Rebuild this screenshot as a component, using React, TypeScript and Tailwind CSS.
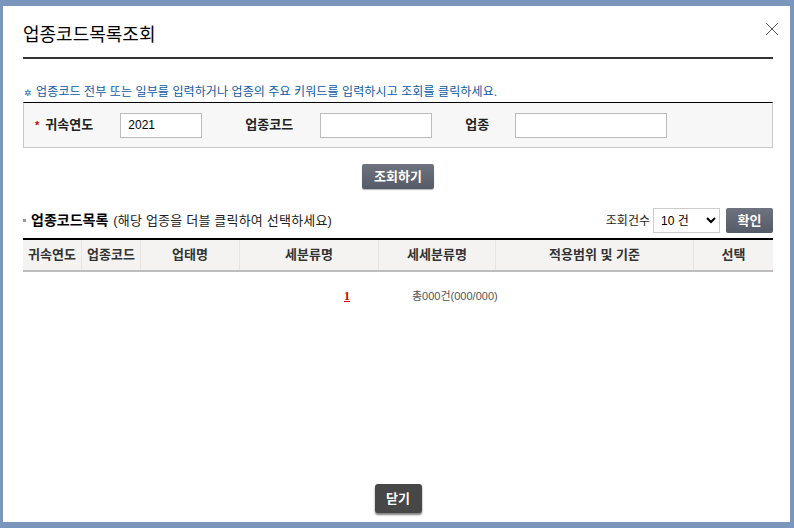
import React, { useState } from 'react';

const font = { fontFamily: '"Liberation Sans", "Noto Sans CJK KR", sans-serif' };

const columns = [
  { label: '귀속연도', w: 'w-[58px]' },
  { label: '업종코드', w: 'w-[59px]' },
  { label: '업태명', w: 'w-[99px]' },
  { label: '세분류명', w: 'w-[139px]' },
  { label: '세세분류명', w: 'w-[117px]' },
  { label: '적용범위 및 기준', w: 'w-[198px]' },
  { label: '선택', w: 'flex-1' },
];

export default function App() {
  const [year, setYear] = useState('2021');
  const [code, setCode] = useState('');
  const [name, setName] = useState('');
  const [count, setCount] = useState('10');

  return (
    <div className="w-[794px] h-[528px] bg-[#7b96bd] pt-[6px] pl-[3px] pr-[4px] pb-[6px]" style={font}>
      <div className="relative w-full h-full bg-white flex flex-col pl-[20px] pr-[17px]">
        <button className="absolute top-[16px] right-[11px] w-[14px] h-[14px] text-[#555]">
          <svg viewBox="0 0 14 14" className="w-[14px] h-[14px]" fill="none" stroke="currentColor" strokeWidth="1">
            <path d="M1 1 L13 13 M13 1 L1 13" />
          </svg>
        </button>

        <h1 className="pt-[17px] pb-[10px] text-[18px] leading-[24px] text-black border-b-2 border-[#333]">
          업종코드목록조회
        </h1>

        <p className="mt-[26px] text-[12px] leading-[15px] text-[#0d5aa7] pl-[1px] tracking-[0.1px]">
          <span className="text-[9px] mr-[4px]">✲</span>업종코드 전부 또는 일부를 입력하거나 업종의 주요 키워드를 입력하시고 조회를 클릭하세요.
        </p>

        <div className="mt-[1px] h-[46px] bg-[#f7f7f7] border-t border-t-black border-x border-b border-x-[#c9c9c9] border-b-[#c9c9c9] flex items-center">
          <span className="ml-[11px] text-[#c00] text-[11px] font-bold mr-[6px]">*</span>
          <span className="text-[13px] font-bold text-[#222] w-[75px]">귀속연도</span>
          <input
            value={year}
            onChange={(e) => setYear(e.target.value)}
            className="w-[82px] h-[25px] border border-[#bbb] bg-white px-[7px] text-[12px] text-black outline-none"
          />
          <span className="ml-[43px] w-[75px] text-[13px] font-bold text-[#222]">업종코드</span>
          <input
            value={code}
            onChange={(e) => setCode(e.target.value)}
            className="w-[112px] h-[25px] border border-[#bbb] bg-white px-[7px] text-[12px] outline-none"
          />
          <span className="ml-[33px] w-[50px] text-[13px] font-bold text-[#222]">업종</span>
          <input
            value={name}
            onChange={(e) => setName(e.target.value)}
            className="w-[152px] h-[25px] border border-[#bbb] bg-white px-[7px] text-[12px] outline-none"
          />
        </div>

        <div className="mt-[16px] flex justify-center">
          <button className="w-[72px] h-[25px] rounded-[2px] bg-gradient-to-b from-[#6e7380] to-[#565b68] text-white text-[13px] font-bold shadow-[0_1px_1px_rgba(0,0,0,0.3)]">
            조회하기
          </button>
        </div>

        <div className="mt-[19px] flex items-center justify-between">
          <div className="flex items-center">
            <span className="w-[3px] h-[3px] bg-[#999] mr-[5px]" />
            <span className="font-bold text-black text-[14px]">업종코드목록</span>
            <span className="ml-[5px] text-[#222] text-[13px] tracking-[0.2px]">(해당 업종을 더블 클릭하여 선택하세요)</span>
          </div>
          <div className="flex items-center">
            <span className="text-[12px] text-[#222] mr-[3px]">조회건수</span>
            <select
              value={count}
              onChange={(e) => setCount(e.target.value)}
              className="w-[67px] h-[25px] border border-[#ccc] bg-white text-[12px] pl-[3px] text-black"
            >
              <option value="10">10 건</option>
              <option value="20">20 건</option>
              <option value="50">50 건</option>
            </select>
            <button className="ml-[6px] w-[47px] h-[25px] rounded-[2px] bg-gradient-to-b from-[#6e7380] to-[#565b68] text-white text-[13px] font-bold">
              확인
            </button>
          </div>
        </div>

        <div className="mt-[5px] flex h-[34px] bg-[#f4f3f1] border-t-2 border-t-black border-b-2 border-b-[#bdbdbd]">
          {columns.map((c, i) => (
            <div
              key={c.label}
              className={`${c.w} flex items-center justify-center text-[13px] font-bold text-[#333] ${i > 0 ? 'border-l border-l-[#e6e5e2]' : ''}`}
            >
              {c.label}
            </div>
          ))}
        </div>

        <div className="mt-[15px] flex items-center text-[11px]">
          <a className="ml-[321px] font-bold text-[#c00] underline text-[12px]" style={{ fontFamily: '"Liberation Serif", serif' }}>
            1
          </a>
          <span className="ml-[62px] text-[#555]">총000건(000/000)</span>
        </div>

        <div className="mt-auto mb-[9px] flex justify-center">
          <button className="w-[47px] h-[29px] rounded-[3px] bg-[#474747] text-white text-[13px] font-bold shadow-[0_2px_2px_rgba(0,0,0,0.5)]">
            닫기
          </button>
        </div>
      </div>
    </div>
  );
}
